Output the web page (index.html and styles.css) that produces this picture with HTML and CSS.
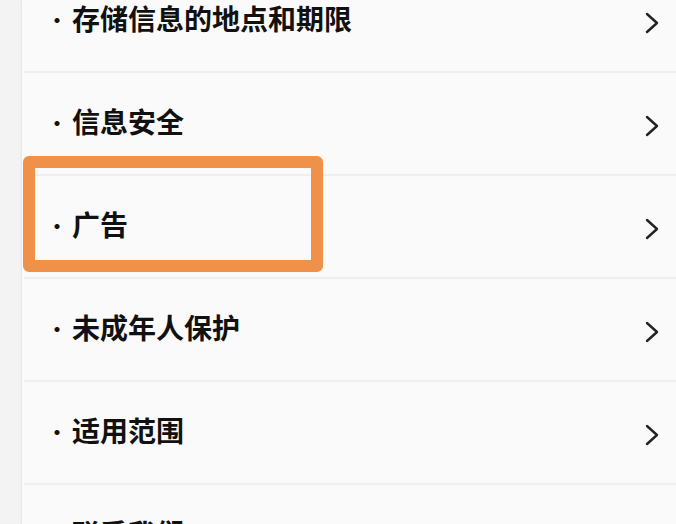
FILE: index.html
```html
<!DOCTYPE html>
<html lang="zh-CN">
<head>
<meta charset="utf-8">
<link rel="stylesheet" href="styles.css">
</head>
<body>
<div class="page">
  <div class="strip"></div>
  <div class="main">
    <ul class="list">
      <li class="row"><span class="label"><span class="dot">·</span>存储信息的地点和期限</span><svg class="chev" viewBox="0 0 14 22" width="14" height="22"><polyline points="2,2 12,11 2,20"/></svg></li>
      <li class="row"><span class="label"><span class="dot">·</span>信息安全</span><svg class="chev" viewBox="0 0 14 22" width="14" height="22"><polyline points="2,2 12,11 2,20"/></svg></li>
      <li class="row"><span class="label"><span class="dot">·</span>广告</span><svg class="chev" viewBox="0 0 14 22" width="14" height="22"><polyline points="2,2 12,11 2,20"/></svg></li>
      <li class="row"><span class="label"><span class="dot">·</span>未成年人保护</span><svg class="chev" viewBox="0 0 14 22" width="14" height="22"><polyline points="2,2 12,11 2,20"/></svg></li>
      <li class="row"><span class="label"><span class="dot">·</span>适用范围</span><svg class="chev" viewBox="0 0 14 22" width="14" height="22"><polyline points="2,2 12,11 2,20"/></svg></li>
      <li class="row"><span class="label"><span class="dot">·</span>联系我们</span><svg class="chev" viewBox="0 0 14 22" width="14" height="22"><polyline points="2,2 12,11 2,20"/></svg></li>
    </ul>
  </div>
  <div class="highlight"></div>
</div>
</body>
</html>
```

FILE: styles.css
```css
html, body {
  margin: 0;
  padding: 0;
  background: #fafafa;
}
.page {
  position: relative;
  display: flex;
  width: 676px;
  height: 524px;
  overflow: hidden;
  font-family: "Noto Sans CJK SC", "Noto Sans", sans-serif;
  color: #111;
}
.strip {
  width: 22px;
  flex: none;
  background: #f3f3f3;
  box-shadow: inset -2px 0 2px -1px #e6e6e6;
}
.main {
  flex: 1;
  margin-left: 2px;
  background: #fafafa;
}
.list {
  list-style: none;
  margin: -30px 0 0 0;
  padding: 0;
}
.row {
  display: flex;
  align-items: center;
  height: 101px;
  border-bottom: 2px solid #efefef;
  padding: 0 17px 0 21px;
}
.label {
  flex: 1;
  font-size: 28px;
  font-weight: 700;
  line-height: 1;
  margin-bottom: 6px;
}
.dot {
  font-size: 24px;
  font-weight: 400;
  margin-right: 3px;
  vertical-align: 1px;
}
.chev {
  flex: none;
  fill: none;
  stroke: #222;
  stroke-width: 2.4;
  stroke-linecap: round;
  stroke-linejoin: round;
  margin-top: 4px;
}
.highlight {
  position: absolute;
  left: 23px;
  top: 156px;
  width: 300px;
  height: 116px;
  box-sizing: border-box;
  border: 12px solid #f0914a;
  border-radius: 6px;
}
```
